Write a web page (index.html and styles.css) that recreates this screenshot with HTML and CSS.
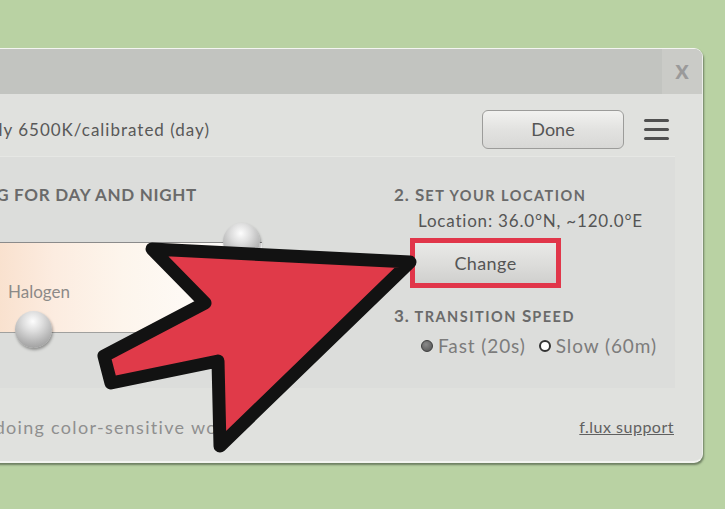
FILE: index.html
```html
<!DOCTYPE html>
<html lang="en">
<head>
    <meta charset="UTF-8">
    <meta name="viewport" content="width=device-width, initial-scale=1.0">
    <title>f.lux settings</title>
    <link rel="stylesheet" href="styles.css">
</head>
<body>
    <div class="window">
        <div class="titlebar">
            <div class="title-fill"></div>
            <div class="close">x</div>
        </div>

        <div class="topbar">
            <div class="status">Currently 6500K/calibrated (day)</div>
            <button class="btn done">Done</button>
            <div class="menu"><i></i><i></i><i></i></div>
        </div>

        <div class="panel">
            <div class="lighting">
                <div class="head-left">1. Lighting for day and night</div>
                <div class="track">
                    <span class="track-label">Halogen</span>
                    <span class="knob knob-top"></span>
                    <span class="knob knob-bottom"></span>
                </div>
            </div>

            <div class="location">
                <h2><span class="cap">2. S</span>et your location</h2>
                <p class="coords">Location: 36.0°N, ~120.0°E</p>
                <div class="highlight"><button class="btn change">Change</button></div>
                <h2 class="speed"><span class="cap">3.</span> transition <span class="cap">S</span>peed</h2>
                <div class="radios">
                    <span class="radio on"></span><span class="radio-text">Fast (20s)</span>
                    <span class="radio"></span><span class="radio-text">Slow (60m)</span>
                </div>
            </div>
        </div>

        <div class="footer">
            <div class="note">Disable f.lux when doing color-sensitive work</div>
            <a class="support" href="#">f.lux support</a>
        </div>
    </div>

    <!-- big red pointer over the screenshot -->
    <svg class="arrow" width="725" height="509" viewBox="0 0 725 509">
        <polygon points="152,249 410,262 220,446 218,361 111,383 104,356 205,303"
                 fill="#e03a49" stroke="#121212" stroke-width="13" stroke-linejoin="round"/>
    </svg>
</body>
</html>
```

FILE: styles.css
```css
* {
    box-sizing: border-box;
    margin: 0;
    padding: 0;
}

body {
    width: 725px;
    height: 509px;
    overflow: hidden;
    position: relative;
    background: #b9d2a3;
    font-family: Lato, "Open Sans", sans-serif;
    color: #585858;
}

/* window is cut off by the left edge of the picture */
.window {
    position: absolute;
    left: -300px;
    top: 48px;
    width: 1003px;
    height: 415px;
    display: flex;
    flex-direction: column;
    background: #e0e1de;
    border-top: 1px solid #f4f5f1;
    border-right: 1px solid #eceeea;
    border-bottom: 2px solid #f3f4f0;
    border-radius: 0 9px 9px 0;
    box-shadow: 1px 2px 2px rgba(50, 60, 45, 0.55);
    overflow: hidden;
}

.titlebar {
    display: flex;
    height: 45px;
    background: #c2c4c0;
}

.title-fill {
    flex: 1;
}

.close {
    width: 40px;
    background: #cacbc7;
    color: #9a9a9a;
    font-size: 26px;
    font-weight: bold;
    line-height: 40px;
    text-align: center;
}

.topbar {
    display: flex;
    align-items: center;
    height: 62px;
    padding-top: 8px;
    padding-right: 33px;
}

.status {
    flex: 0 0 510px;
    text-align: right;
    white-space: nowrap;
    font-size: 17px;
    letter-spacing: 1px;
}

.btn {
    font-family: inherit;
    color: #555;
    font-size: 18px;
    border: 1px solid #9c9c9a;
    border-radius: 6px;
    background: linear-gradient(#f2f2f0, #e2e2e0 50%, #d8d8d6);
}

.done {
    margin-left: auto;
    width: 142px;
    height: 39px;
}

.menu {
    display: flex;
    flex-direction: column;
    gap: 6px;
    margin-left: 20px;
    width: 25px;
}

.menu i {
    display: block;
    height: 3px;
    border-radius: 2px;
    background: #505050;
}

.panel {
    display: grid;
    grid-template-columns: 694px 1fr;
    height: 232px;
    margin-right: 27px;
    background: #dcdddb;
    border-top: 1px solid #e6e7e4;
}

.head-left {
    width: 497px;
    margin-top: 28px;
    text-align: right;
    white-space: nowrap;
    font-size: 17px;
    font-weight: bold;
    line-height: 20px;
    letter-spacing: 0.7px;
    text-transform: uppercase;
    color: #6a6a6a;
}

.track {
    position: relative;
    width: 562px;
    height: 91px;
    margin-top: 37px;
    padding: 38px 0 0 308px;
    border-top: 1px solid #8b8b8b;
    border-bottom: 1px solid #a0a09e;
    background: linear-gradient(90deg, #eab48e 0, #f5d4ba 40%, #f9e1ce 53%, #fcece0 63%, #fdf5ec 75%, #fefaf6 88%, #fff 100%);
}

.track-label {
    font-size: 17px;
    color: #8c8a88;
}

.knob {
    position: absolute;
    width: 37px;
    height: 37px;
    border-radius: 50%;
    background: radial-gradient(circle at 48% 28%, #fdfdfd 0, #dedede 30%, #b4b4b4 65%, #8c8c8c 100%);
    box-shadow: 1px 2px 3px rgba(0, 0, 0, 0.35);
}

.knob-top {
    left: 523px;
    top: -20px;
}

.knob-bottom {
    left: 315px;
    top: 68px;
}

.location {
    padding-top: 28px;
}

/* small-caps headings */
.location h2 {
    font-size: 14.5px;
    font-weight: bold;
    line-height: 20px;
    letter-spacing: 1.5px;
    text-transform: uppercase;
    color: #6a6a6a;
}

.location h2 .cap {
    font-size: 17px;
    letter-spacing: 1px;
}

.coords {
    margin-top: 5px;
    padding-left: 24px;
    font-size: 17px;
    line-height: 20px;
    letter-spacing: 0.8px;
    color: #555;
}

.highlight {
    width: 151px;
    height: 50px;
    margin: 7px 0 0 16px;
    border: 5px solid #e1364a;
}

.change {
    width: 100%;
    height: 100%;
    border: none;
    border-radius: 0;
    letter-spacing: 0.4px;
    background: linear-gradient(#e9e9e7, #dcdcda 55%, #d0d0ce);
}

.location .speed {
    margin-top: 18px;
}

.radios {
    display: flex;
    align-items: center;
    margin-top: 9px;
    padding-left: 27px;
    font-size: 19px;
    line-height: 20px;
    letter-spacing: 0.9px;
    color: #7c7c7c;
}

.radio {
    width: 12px;
    height: 12px;
    margin-right: 5px;
    border-radius: 50%;
    border: 2px solid #333;
    background: #fff;
}

.radio.on {
    border: 1px solid #3c3c3c;
    background: radial-gradient(circle at 40% 35%, #8a8a8a, #505050);
}

.radio-text {
    margin-right: 13px;
}

.footer {
    flex: 1;
    display: flex;
    align-items: center;
    justify-content: space-between;
    padding: 4px 28px 0 0;
}

.note {
    width: 536px;
    text-align: right;
    white-space: nowrap;
    font-size: 18px;
    letter-spacing: 1.3px;
    color: #8f8f8f;
}

.support {
    font-size: 16px;
    letter-spacing: 0.5px;
    color: #606060;
    text-decoration: underline;
}

.arrow {
    position: absolute;
    left: 0;
    top: 0;
    pointer-events: none;
}
```
